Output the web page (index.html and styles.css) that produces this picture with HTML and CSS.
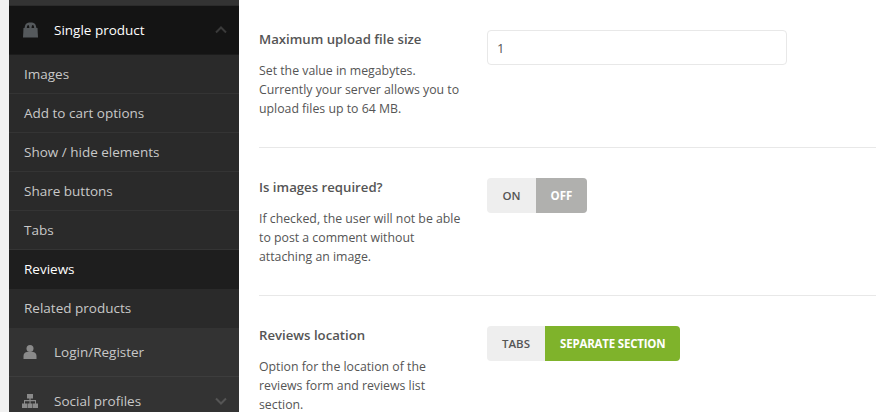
FILE: index.html
```html
<!DOCTYPE html>
<html lang="en">
<head>
<meta charset="utf-8">
<title>Reviews settings</title>
<link rel="stylesheet" href="styles.css">
</head>
<body>
<div class="page">
  <aside class="sidebar">
    <div class="stub"></div>
    <div class="menu-item open">
      <svg class="icon bag" viewBox="0 0 16 16"><path fill="#55595c" d="M1 6h14l.5 9.500H.5z"/><path fill="#55595c" d="M2 6.500C2.500 2 4 .5 8 .5s5.500 1.500 6 6h-2.200C11.500 4 11 3 10.300 3S9.200 4 9 6.500H7C6.800 4 6.300 3 5.700 3S4.500 4 4.200 6.500z"/></svg>
      <span class="label">Single product</span>
      <svg class="chev" viewBox="0 0 12 8"><path d="M1 6.500l5-5 5 5" fill="none" stroke="#3a3a3a" stroke-width="2"/></svg>
    </div>
    <a class="sub">Images</a>
    <a class="sub">Add to cart options</a>
    <a class="sub">Show / hide elements</a>
    <a class="sub">Share buttons</a>
    <a class="sub">Tabs</a>
    <a class="sub active">Reviews</a>
    <a class="sub last">Related products</a>
    <div class="menu-item">
      <svg class="icon" viewBox="0 0 16 16"><circle cx="8" cy="4.500" r="3.500" fill="#8a8a8a"/><path fill="#8a8a8a" d="M1.500 15v-3c0-2.500 2-4 3.500-4h6c1.500 0 3.500 1.500 3.500 4v3z"/></svg>
      <span class="label">Login/Register</span>
    </div>
    <div class="menu-item">
      <svg class="icon wide" viewBox="0 0 18 16"><path fill="#8a8a8a" d="M6 1h6v4.500H9.600V7H15v3.500h2V15h-5v-4.500h2V8.200H9.600v2.300H11.500V15h-5v-4.500h2V8.200H4v2.300h2V15H1v-4.500h2V7h5.400V5.500H6z"/></svg>
      <span class="label">Social profiles</span>
      <svg class="chev" viewBox="0 0 12 8"><path d="M1 1.500l5 5 5-5" fill="none" stroke="#555" stroke-width="2"/></svg>
    </div>
  </aside>
  <main class="content">
    <section class="row first">
      <div class="info">
        <h3>Maximum upload file size</h3>
        <p>Set the value in megabytes. Currently your server allows you to upload files up to 64 MB.</p>
      </div>
      <div class="control"><input class="field" type="text" value="1"></div>
    </section>
    <section class="row">
      <div class="info">
        <h3>Is images required?</h3>
        <p>If checked, the user will not be able to post a comment without attaching an image.</p>
      </div>
      <div class="control">
        <div class="switch"><span class="opt">ON</span><span class="opt off">OFF</span></div>
      </div>
    </section>
    <section class="row">
      <div class="info">
        <h3>Reviews location</h3>
        <p>Option for the location of the reviews form and reviews list section.</p>
      </div>
      <div class="control">
        <div class="switch"><span class="opt">TABS</span><span class="opt on">SEPARATE SECTION</span></div>
      </div>
    </section>
  </main>
</div>
</body>
</html>
```

FILE: styles.css
```css
* { box-sizing: border-box; }
html, body { margin: 0; height: 412px; overflow: hidden; background: #fff; }
body { font-family: "Open Sans", sans-serif; font-size: 13px; color: #555; }
.page { display: flex; height: 412px; overflow: hidden; padding-left: 9px; background: #f1f1f1; }
.sidebar { width: 230px; flex: none; background: #333; }
.stub { height: 6px; background: #333; border-bottom: 1px solid #2b2b2b; }
.menu-item { display: flex; align-items: center; height: 49px; padding: 0 12px 1px 13px; color: #c8c8c8; font-size: 13.5px; border-bottom: 1px solid #3d3d3d; background: #333; }
.menu-item.open { height: 49px; padding-bottom: 0; background: #141414; color: #fff; border-bottom: 1px solid #1c1c1c; }
.icon { width: 16px; height: 16px; margin-right: 16px; flex: none; }
.icon.bag { width: 17px; margin-right: 15px; }
.icon.wide { width: 18px; margin-left: -1px; margin-right: 15px; }
.label { flex: 1; }
.chev { width: 12px; height: 8px; flex: none; margin-right: 0; }
.sub { display: flex; align-items: center; height: 39px; padding: 0 0 1px 15px; font-size: 13.5px; color: #c8c8c8; background: #2a2a2a; border-bottom: 1px solid #343434; }
.sub.active { background: #1e1e1e; color: #fff; border-bottom-color: #1e1e1e; }
.sub.last { border-bottom: 0; padding-bottom: 2px; }
.content { flex: 1; background: #fff; padding: 30px 0 0 20px; }
.row { display: flex; padding-top: 30px; padding-bottom: 29px; border-bottom: 1px solid #e8e8e8; }
.row.first { padding-top: 0; }
.info { width: 228px; flex: none; padding-right: 22px; }
h3 { margin: -1px 0 12px; font-size: 13.2px; line-height: 20px; font-weight: 600; color: #555; }
p { margin: 0; font-size: 12.3px; line-height: 19px; color: #555; }
.control { flex: 1; }
.field { display: block; width: 300px; height: 35px; padding: 0 9px; border: 1px solid #e8e8e8; border-radius: 4px; font: 13px "Open Sans", sans-serif; color: #555; background: #fff; }
.switch { display: inline-flex; height: 35px; border-radius: 4px; overflow: hidden; font-size: 11.5px; font-weight: 600; background: #eee; }
.opt { display: flex; align-items: center; justify-content: center; min-width: 49px; padding: 0 15px; color: #555; }
.opt.off { min-width: 51px; padding: 0 14px; background: #b0b0ae; color: #fff; font-weight: 700; }
.opt.on { background: #7fb32b; color: #fff; font-weight: 700; letter-spacing: -0.2px; }
```
